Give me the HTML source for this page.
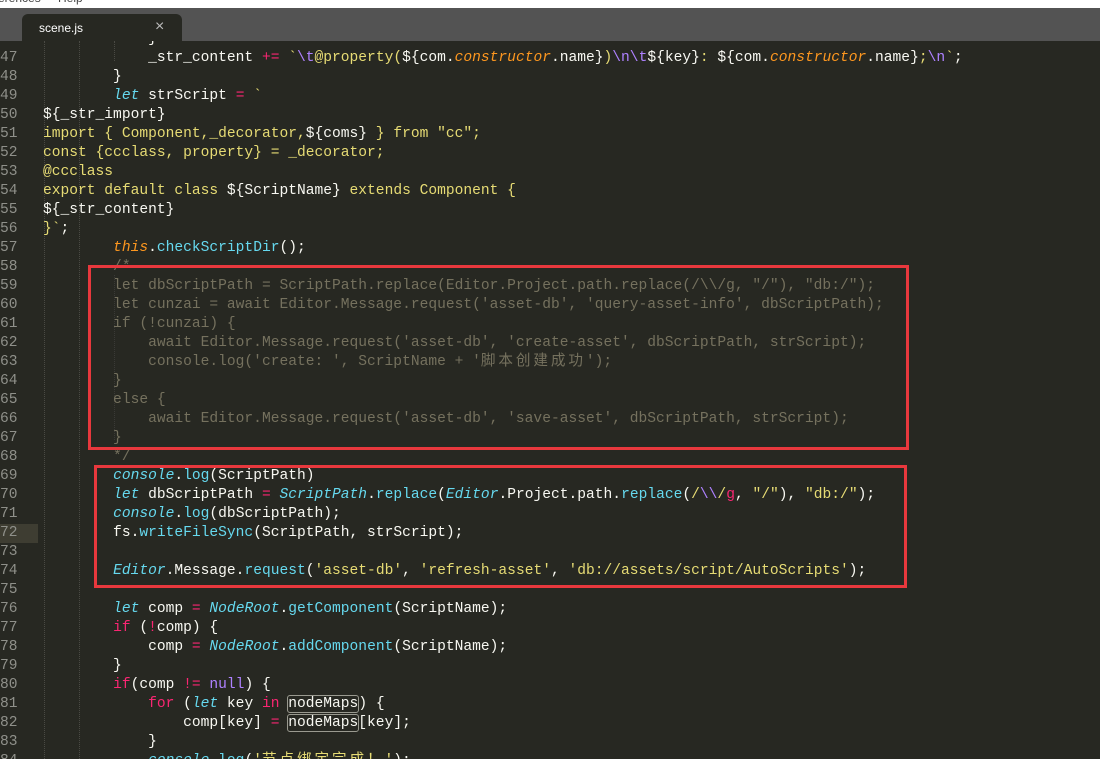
<!DOCTYPE html>
<html style="overflow:hidden;height:759px"><head><meta charset="utf-8"><style>
body{margin:0;width:1100px;height:759px;overflow:hidden;background:#272822;position:relative;font-family:"Liberation Mono","Noto Sans CJK SC",monospace;}
#menu{position:absolute;left:0;top:0;width:1100px;height:8px;background:#fff;overflow:hidden;font:12px "Liberation Sans",sans-serif;color:#444;z-index:5}
#menu span{position:absolute;top:-9px}
#tabs{position:absolute;left:0;top:8px;width:1100px;height:33px;background:#535353;z-index:5}
#tab{position:absolute;left:22px;top:6px;width:160px;height:27px;background:#272822;border-radius:6px 6px 0 0;}
#tab .t{position:absolute;left:17px;top:7px;font:12px "Liberation Sans",sans-serif;color:#fff}
#tab .x{position:absolute;left:133px;top:4px;font:16px "Liberation Sans",sans-serif;color:#bbb}
#gut{position:absolute;left:0;top:30px;width:38px;color:#8f908a;font-size:14.6px;line-height:19px;text-align:right}
#gut div{padding-right:21px;width:17px;height:19px}
#code{position:absolute;left:43px;top:30px;font-size:14.6px;line-height:19px;color:#f8f8f2}
#code div{height:19px;white-space:pre}
.k{color:#f92672}.i{color:#66d9ef;font-style:italic}.s{color:#e6db74}.p{color:#ae81ff}.f{color:#66d9ef}.c{color:#75715e}.o{color:#fd971f;font-style:italic}
.cj{letter-spacing:2.9px}
.guide{position:absolute;top:41px;width:0;border-left:1px dotted #4a4a44;height:720px}
.box{position:absolute;border:3px solid #e8383d}
.hl{border:1px solid #9a9a90;border-radius:3px;margin:-1px}
</style></head><body>
<div id="menu"><span style="left:-2px">erences</span><span style="left:58px">Help</span></div>
<div id="tabs"><div id="tab"><span class="t">scene.js</span><span class="x">×</span></div></div>
<div class="guide" style="left:44px"></div>
<div class="guide" style="left:79px"></div>
<div class="guide" style="left:114px;top:41px;height:20px"></div>
<div class="guide" style="left:114px;top:275px;height:165px;border-color:#3a3a36"></div>
<div style="position:absolute;left:0;top:524px;width:38px;height:19px;background:#3e3d32"></div>
<div id="gut"><div></div><div>47</div><div>48</div><div>49</div><div>50</div><div>51</div><div>52</div><div>53</div><div>54</div><div>55</div><div>56</div><div>57</div><div>58</div><div>59</div><div>60</div><div>61</div><div>62</div><div>63</div><div>64</div><div>65</div><div>66</div><div>67</div><div>68</div><div>69</div><div>70</div><div>71</div><div>72</div><div>73</div><div>74</div><div>75</div><div>76</div><div>77</div><div>78</div><div>79</div><div>80</div><div>81</div><div>82</div><div>83</div><div>84</div></div>
<div id="code">
<div>            }</div>
<div>            _str_content <span class="k">+=</span> <span class="s">`</span><span class="p">\t</span><span class="s">@property(</span>${com.<span class="o">constructor</span>.name}<span class="s">)</span><span class="p">\n\t</span>${key}<span class="s">: </span>${com.<span class="o">constructor</span>.name}<span class="s">;</span><span class="p">\n</span><span class="s">`</span>;</div>
<div>        }</div>
<div>        <span class="i">let</span> strScript <span class="k">=</span> <span class="s">`</span></div>
<div>${_str_import}</div>
<div><span class="s">import { Component,_decorator,</span>${coms}<span class="s"> } from "cc";</span></div>
<div><span class="s">const {ccclass, property} = _decorator;</span></div>
<div><span class="s">@ccclass</span></div>
<div><span class="s">export default class </span>${ScriptName}<span class="s"> extends Component {</span></div>
<div>${_str_content}</div>
<div><span class="s">}`</span>;</div>
<div>        <span class="o">this</span>.<span class="f">checkScriptDir</span>();</div>
<div class="c">        /*</div>
<div class="c">        let dbScriptPath = ScriptPath.replace(Editor.Project.path.replace(/\\/g, "/"), "db:/");</div>
<div class="c">        let cunzai = await Editor.Message.request('asset-db', 'query-asset-info', dbScriptPath);</div>
<div class="c">        if (!cunzai) {</div>
<div class="c">            await Editor.Message.request('asset-db', 'create-asset', dbScriptPath, strScript);</div>
<div class="c">            console.log('create: ', ScriptName + '<span class="cj">脚本创建成功</span>');</div>
<div class="c">        }</div>
<div class="c">        else {</div>
<div class="c">            await Editor.Message.request('asset-db', 'save-asset', dbScriptPath, strScript);</div>
<div class="c">        }</div>
<div class="c">        */</div>
<div>        <span class="i">console</span>.<span class="f">log</span>(ScriptPath)</div>
<div>        <span class="i">let</span> dbScriptPath <span class="k">=</span> <span class="i">ScriptPath</span>.<span class="f">replace</span>(<span class="i">Editor</span>.Project.path.<span class="f">replace</span>(<span class="s">/</span><span class="p">\\</span><span class="s">/</span><span class="k">g</span>, <span class="s">"/"</span>), <span class="s">"db:/"</span>);</div>
<div>        <span class="i">console</span>.<span class="f">log</span>(dbScriptPath);</div>
<div>        fs.<span class="f">writeFileSync</span>(ScriptPath, strScript);</div>
<div> </div>
<div>        <span class="i">Editor</span>.Message.<span class="f">request</span>(<span class="s">'asset-db'</span>, <span class="s">'refresh-asset'</span>, <span class="s">'db://assets/script/AutoScripts'</span>);</div>
<div> </div>
<div>        <span class="i">let</span> comp <span class="k">=</span> <span class="i">NodeRoot</span>.<span class="f">getComponent</span>(ScriptName);</div>
<div>        <span class="k">if</span> (<span class="k">!</span>comp) {</div>
<div>            comp <span class="k">=</span> <span class="i">NodeRoot</span>.<span class="f">addComponent</span>(ScriptName);</div>
<div>        }</div>
<div>        <span class="k">if</span>(comp <span class="k">!=</span> <span class="p">null</span>) {</div>
<div>            <span class="k">for</span> (<span class="i">let</span> key <span class="k">in</span> <span class="hl">nodeMaps</span>) {</div>
<div>                comp[key] <span class="k">=</span> <span class="hl">nodeMaps</span>[key];</div>
<div>            }</div>
<div>            <span class="i">console</span>.<span class="f">log</span>(<span class="s">'<span class="cj">节点绑定完成！</span>'</span>);</div>
</div>
<div class="box" style="left:88px;top:265px;width:815px;height:179px"></div>
<div class="box" style="left:94px;top:465px;width:807px;height:117px"></div>
</body></html>
